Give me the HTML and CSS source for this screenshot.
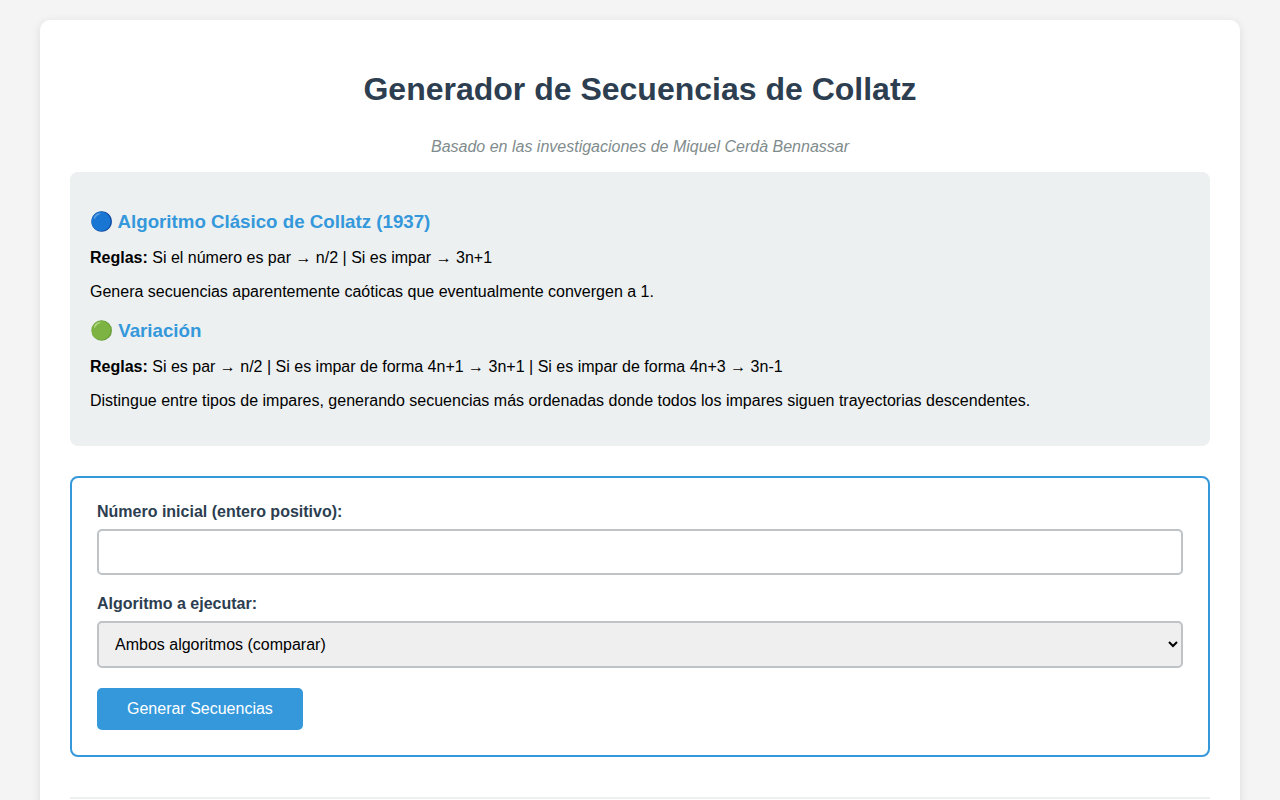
FILE: index.html
```html
<!DOCTYPE html>
<html lang="es">

<head>
    <meta charset="UTF-8">
    <meta name="viewport" content="width=device-width, initial-scale=1.0">
    <title>Generador de Secuencias de Collatz</title>
    <link rel="stylesheet" href="styles.css">
</head>

<body>
    <div class="container">
        <h1>Generador de Secuencias de Collatz</h1>
        <p class="subtitle">Basado en las investigaciones de Miquel Cerdà Bennassar</p>

        <div class="info-box">
            <h3>🔵 Algoritmo Clásico de Collatz (1937)</h3>
            <p><strong>Reglas:</strong> Si el número es par → n/2 | Si es impar → 3n+1</p>
            <p>Genera secuencias aparentemente caóticas que eventualmente convergen a 1.</p>

            <h3>🟢 Variación</h3>
            <p><strong>Reglas:</strong> Si es par → n/2 | Si es impar de forma 4n+1 → 3n+1 | Si es impar de forma 4n+3 → 3n-1</p>
            <p>Distingue entre tipos de impares, generando secuencias más ordenadas donde todos los impares siguen trayectorias descendentes.</p>
        </div>

        <form class="input-section">
            <div class="form-group">
                <label for="numero">Número inicial (entero positivo):</label>
                <input type="number" id="numero" min="1">
            </div>
            <div class="form-group">
                <label for="algoritmo">Algoritmo a ejecutar:</label>
                <select id="algoritmo">
                    <option value="ambos">Ambos algoritmos (comparar)</option>
                </select>
            </div>
            <button type="button" class="generate-btn">Generar Secuencias</button>
        </form>

        <div class="footer"></div>
    </div>
</body>

</html>
```

FILE: styles.css
```css
body {
    font-family: "Liberation Sans", Arial, sans-serif;
    max-width: 1200px;
    margin: 0 auto;
    padding: 20px;
    background-color: #f4f4f4;
}

.container {
    background-color: white;
    padding: 30px;
    border-radius: 10px;
    box-shadow: 0 2px 10px rgba(0, 0, 0, 0.1);
}

h1 {
    color: #2c3e50;
    text-align: center;
    margin-bottom: 30px;
}

.subtitle {
    color: #7f8c8d;
    text-align: center;
    font-style: italic;
}

.info-box {
    background-color: #ecf0f1;
    padding: 20px;
    border-radius: 8px;
    margin-bottom: 30px;
}

.info-box h3 {
    color: #3498db;
    margin-bottom: 10px;
}

.input-section {
    border: 2px solid #3498db;
    border-radius: 8px;
    padding: 25px;
    margin-bottom: 40px;
}

.form-group {
    margin-bottom: 20px;
}

label {
    display: block;
    font-weight: bold;
    color: #2c3e50;
    margin-bottom: 8px;
}

input,
select {
    width: 100%;
    padding: 12px;
    border: 2px solid #bdc3c7;
    border-radius: 5px;
    font-family: inherit;
    font-size: 16px;
    box-sizing: border-box;
}

.generate-btn {
    background-color: #3498db;
    color: white;
    padding: 12px 30px;
    border: none;
    border-radius: 5px;
    font-family: inherit;
    font-size: 16px;
    cursor: pointer;
}

.generate-btn:hover {
    background-color: #2980b9;
}

.footer {
    border-top: 2px solid #ecf0f1;
    padding-top: 20px;
}
```
